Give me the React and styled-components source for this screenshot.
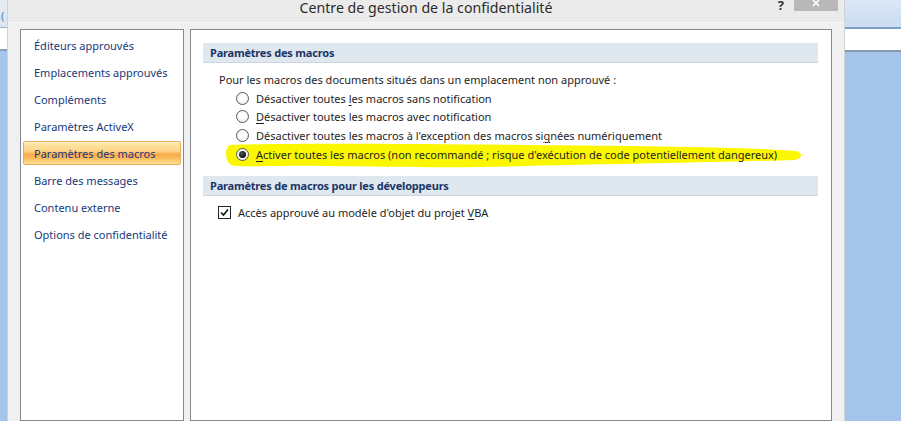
import React from "react";
import styled, { createGlobalStyle } from "styled-components";

const GlobalStyle = createGlobalStyle`
  html, body { margin: 0; padding: 0; width: 901px; height: 421px; overflow: hidden; background: #a5c4ea; }
  body { font-family: "Segoe UI", "Noto Sans", sans-serif; }
  *, *::before, *::after { box-sizing: border-box; }
`;

const Page = styled.div`
  display: flex;
  width: 901px;
  height: 421px;
`;

const Strip = styled.div`
  display: flex;
  flex-direction: column;
  width: ${(p) => (p.$w ? `${p.$w}px` : "auto")};
  flex: ${(p) => (p.$w ? "none" : "1")};
`;

const StripTop = styled.div`
  height: 27px;
  background: ${(p) => p.$bg || "linear-gradient(#dbe7f5, #c9dcf2)"};
  color: #4f78ab;
  font-size: 11px;
  line-height: 32px;
  overflow: hidden;
  padding-left: 1px;
`;

const StripLine = styled.div`
  height: ${(p) => p.$h || 1}px;
  background: ${(p) => p.$c};
`;

const StripWhite = styled.div`
  height: 21px;
  background: #ffffff;
`;

const StripBlue = styled.div`
  flex: 1;
  background: #a5c4ea;
`;

const Dialog = styled.div`
  width: 838px;
  flex: none;
  display: flex;
  flex-direction: column;
  background: #f0f0f0;
  border-left: 1px solid #d2d2d2;
  border-right: 1px solid #d2d2d2;
`;

const TitleBar = styled.div`
  height: 23px;
  display: grid;
  grid-template-columns: 1fr auto 1fr;
  background: #ebebeb;
  border-bottom: 1px solid #f7f7f7;
`;

const Title = styled.div`
  grid-column: 2;
  font-size: 14.2px;
  line-height: 15px;
  color: #2b2b2b;
  white-space: nowrap;
`;

const TitleButtons = styled.div`
  grid-column: 3;
  display: flex;
  justify-content: flex-end;
  align-items: flex-start;
  padding-right: 6px;
`;

const Help = styled.div`
  font-size: 13px;
  font-weight: bold;
  line-height: 11px;
  color: #333;
  margin-right: 10px;
`;

const Close = styled.div`
  width: 44px;
  height: 11px;
  background: #b8b8b8;
  display: flex;
  justify-content: center;
  align-items: flex-start;
`;

const Client = styled.div`
  flex: 1;
  display: flex;
  gap: 6px;
  padding: 6px 12px 0 12px;
  min-height: 0;
`;

const Nav = styled.div`
  width: 164px;
  flex: none;
  border: 1px solid #828790;
  background: #ffffff;
  padding: 3px 2px;
  display: flex;
  flex-direction: column;
  gap: 3px;
`;

const NavItem = styled.div`
  height: 24px;
  display: flex;
  align-items: center;
  padding-left: 10px;
  font-size: 11px;
  color: #17397a;
  border: 1px solid transparent;
  border-radius: 2px;
  white-space: nowrap;
  ${(p) =>
    p.$active &&
    `
    background: linear-gradient(#fde9a9 0%, #fdd587 40%, #f9a94a 58%, #fbc467 80%, #fde596 100%);
    border-color: #e3ad5b;
    box-shadow: inset 0 1px 0 rgba(255,255,255,0.5);
  `}
`;

const Panel = styled.div`
  flex: 1;
  min-width: 0;
  border: 1px solid #828790;
  background: #ffffff;
  padding: 13px 13px 0 12px;
  display: flex;
  flex-direction: column;
`;

const SectionHeader = styled.div`
  height: 20px;
  flex: none;
  background: #dfe7ef;
  border-bottom: 1px solid #cdd6e0;
  display: flex;
  align-items: center;
  padding-left: 7px;
  font-size: 11px;
  letter-spacing: -0.2px;
  font-weight: bold;
  color: #1b3567;
  margin-top: ${(p) => p.$mt || 0}px;
`;

const Line = styled.div`
  position: relative;
  height: 18.7px;
  flex: none;
  display: flex;
  align-items: center;
  font-size: 11px;
  color: #1e1e1e;
  white-space: nowrap;
  padding-left: ${(p) => p.$indent || 0}px;
  margin-top: ${(p) => p.$mt || 0}px;
`;

const Label = styled.span`
  position: relative;
  z-index: 1;
`;

const Acc = styled.u`
  text-decoration: underline;
  text-underline-offset: 2px;
`;

const Highlight = styled.svg`
  position: absolute;
  left: 22px;
  top: -2px;
  z-index: 0;
`;

const Radio = styled.span`
  position: relative;
  z-index: 1;
  width: 13px;
  height: 13px;
  border-radius: 50%;
  border: 1px solid #5a5a5a;
  background: radial-gradient(circle at 50% 40%, #ffffff 30%, #e6e6e6 100%);
  margin-right: 7px;
  display: flex;
  align-items: center;
  justify-content: center;
  flex: none;
  &::after {
    content: "";
    display: ${(p) => (p.$checked ? "block" : "none")};
    width: 7px;
    height: 7px;
    border-radius: 50%;
    background: radial-gradient(circle at 40% 35%, #555 0%, #111 70%);
  }
`;

const Check = styled.span`
  width: 13px;
  height: 13px;
  border: 1px solid #262626;
  background: #fff;
  margin-right: 7px;
  display: flex;
  align-items: center;
  justify-content: center;
  flex: none;
`;

const navItems = [
  "Éditeurs approuvés",
  "Emplacements approuvés",
  "Compléments",
  "Paramètres ActiveX",
  "Paramètres des macros",
  "Barre des messages",
  "Contenu externe",
  "Options de confidentialité",
];

export default function App() {
  return (
    <>
      <GlobalStyle />
      <Page>
        <Strip $w={7}>
          <StripTop $bg="linear-gradient(#e7edf4, #dbe5f1)">(</StripTop>
          <StripLine $c="#9bb3d0" />
          <StripWhite />
          <StripLine $c="#8e9fb4" $h={2} />
          <StripBlue />
        </Strip>
        <Dialog>
          <TitleBar>
            <Title>Centre de gestion de la confidentialité</Title>
            <TitleButtons>
              <Help>?</Help>
              <Close>
                <svg width="10" height="8" viewBox="0 0 10 8">
                  <path d="M2 0 L8 6 M8 0 L2 6" stroke="#ffffff" strokeWidth="1.6" />
                </svg>
              </Close>
            </TitleButtons>
          </TitleBar>
          <Client>
            <Nav>
              {navItems.map((t) => (
                <NavItem key={t} $active={t === "Paramètres des macros"}>
                  {t}
                </NavItem>
              ))}
            </Nav>
            <Panel>
              <SectionHeader>Paramètres des macros</SectionHeader>
              <Line $indent={16} $mt={7}>
                Pour les macros des documents situés dans un emplacement non approuvé :
              </Line>
              <Line $indent={33}>
                <Radio />
                <Label>
                  Désactiver toutes <Acc>l</Acc>es macros sans notification
                </Label>
              </Line>
              <Line $indent={33}>
                <Radio />
                <Label>
                  <Acc>D</Acc>ésactiver toutes les macros avec notification
                </Label>
              </Line>
              <Line $indent={33}>
                <Radio />
                <Label>
                  Désactiver toutes les macros à l'exception des macros si<Acc>g</Acc>nées numériquement
                </Label>
              </Line>
              <Line $indent={33}>
                <Highlight width="580" height="27" viewBox="0 0 580 27">
                  <path
                    d="M5,2 C60,0 200,1 300,2 C420,3 520,4 571,8 C578,10 578,15 570,17 C500,19 400,21 300,23 C240,25 180,24 100,23 C50,22 15,25 6,22 C0,18 -1,5 5,2 Z"
                    fill="#fbf700"
                  />
                </Highlight>
                <Radio $checked />
                <Label>
                  <Acc>A</Acc>ctiver toutes les macros (non recommandé ; risque d'exécution de code potentiellement dangereux)
                </Label>
              </Line>
              <SectionHeader $mt={13}>Paramètres de macros pour les développeurs</SectionHeader>
              <Line $indent={15} $mt={7}>
                <Check>
                  <svg width="9" height="9" viewBox="0 0 9 9">
                    <path d="M1 4.5 L3.5 7 L8 1.5" stroke="#111" strokeWidth="1.6" fill="none" />
                  </svg>
                </Check>
                <Label>
                  Accès approuvé au modèle d'objet du projet <Acc>V</Acc>BA
                </Label>
              </Line>
            </Panel>
          </Client>
        </Dialog>
        <Strip>
          <StripTop />
          <StripLine $c="#7f9fc7" $h={2} />
          <StripWhite />
          <StripLine $c="#8797ad" $h={2} />
          <StripBlue />
        </Strip>
      </Page>
    </>
  );
}
